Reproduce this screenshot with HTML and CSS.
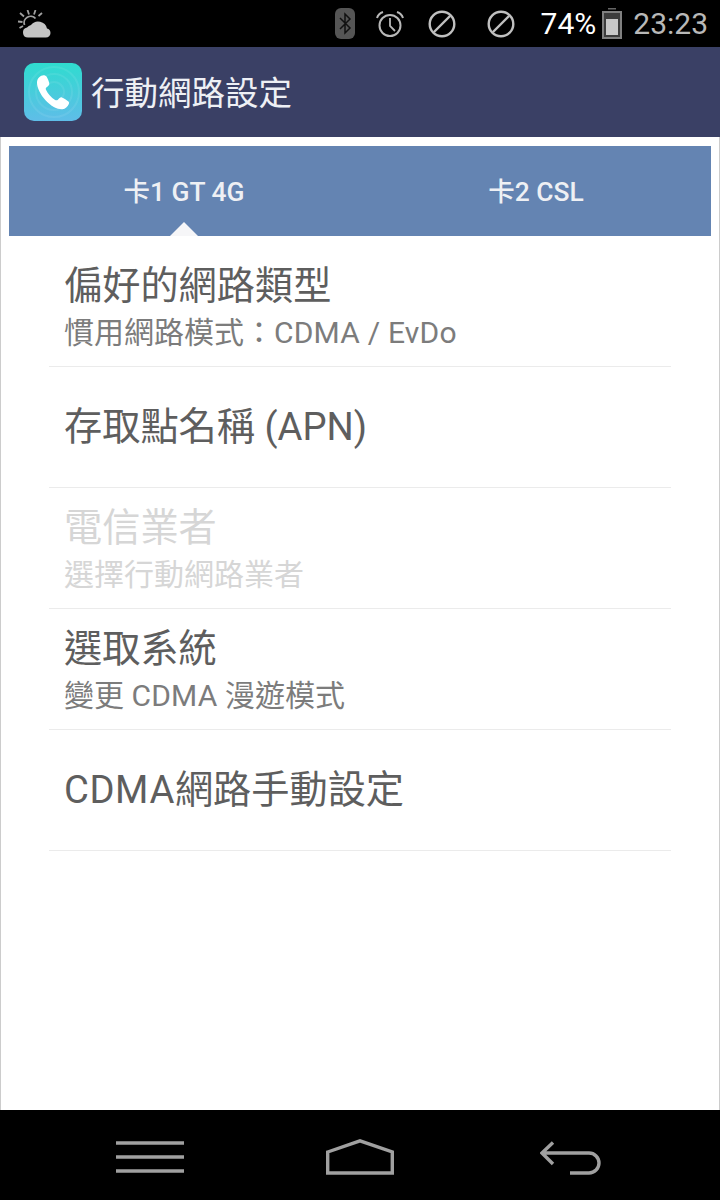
FILE: index.html
```html
<!DOCTYPE html>
<html lang="zh-Hant">
<head>
    <meta charset="UTF-8">
    <meta name="viewport" content="width=device-width, initial-scale=1.0">
    <title>行動網路設定</title>
    <link rel="stylesheet" href="styles.css">
</head>
<body>

    <!-- status bar -->
    <div class="status-bar">
        <svg class="weather-icon" width="34" height="28" viewBox="0 0 34 28">
            <g stroke="#a0a0a0" stroke-width="1.800" fill="none">
                <path d="M3 3l4 3.500M10.500 0l1.500 4.500M18.500 0l-1.500 4.500M25 3l-3.500 3M1 11.500l4.500 .5M2.500 18l3.500-2"/>
                <path d="M7.500 15a6.500 6.500 0 0 1 11-6.500"/>
            </g>
            <path d="M11 27.500a5 5 0 0 1-1-9.900a7.500 7.500 0 0 1 4-2.500a9 9 0 0 1 16 3.500a4.600 4.600 0 0 1 3.500 4.300a4.600 4.600 0 0 1-4.600 4.600z" fill="#c4c4c4"/>
        </svg>
        <div class="status-right">
            <svg class="bt-icon" width="20" height="31" viewBox="0 0 20 31">
                <rect width="20" height="31" rx="6" fill="#555"/>
                <path d="M5 10l10 10-5 5V6l5 5-10 10" fill="none" stroke="#111" stroke-width="1.500"/>
            </svg>
            <svg class="alarm-icon" width="30" height="30" viewBox="0 0 30 30" fill="none" stroke="#b8b8b8" stroke-width="2">
                <circle cx="15" cy="16.500" r="10.500"/>
                <path d="M15 9v8l5 5" stroke-width="1.800"/>
                <path d="M2 9c1-3 3-5 6-6M28 9c-1-3-3-5-6-6"/>
            </svg>
            <svg class="block-icon" width="28" height="28" viewBox="0 0 28 28" fill="none" stroke="#c0c0c0" stroke-width="2.400">
                <circle cx="14" cy="14" r="12.300"/>
                <path d="M6 22L22 6"/>
            </svg>
            <svg class="block-icon second" width="28" height="28" viewBox="0 0 28 28" fill="none" stroke="#c0c0c0" stroke-width="2.400">
                <circle cx="14" cy="14" r="12.300"/>
                <path d="M6 22L22 6"/>
            </svg>
            <span class="battery-text">74%</span>
            <svg class="battery-icon" width="20" height="31" viewBox="0 0 20 31">
                <rect x="6" y="0" width="8" height="1.500" fill="#666"/>
                <rect x="1" y="4" width="18" height="26" fill="#3c3c3c" stroke="#808080" stroke-width="2"/>
                <rect x="4" y="11" width="12" height="16" fill="#c8c8c8"/>
            </svg>
            <span class="clock">23:23</span>
        </div>
    </div>

    <!-- title bar -->
    <div class="app-bar">
        <div class="app-icon">
            <svg width="58" height="58" viewBox="0 0 58 58">
                <g fill="none" stroke="#fff" stroke-opacity="0.08" stroke-width="2">
                    <circle cx="30" cy="29" r="10"/>
                    <circle cx="30" cy="29" r="18"/>
                    <circle cx="30" cy="29" r="25"/>
                </g>
                <path transform="translate(-1 1)" d="M16 13.500c2-2 4-2.500 6-2l1.500 1c1 1.500 2.500 5 2.800 7 .2 1.500-1 2.500-3 4-.7.700-.7 1.500-.2 2.500 2 4 5 7.500 9 10 1 .5 2 .5 2.800-.3 1.500-1.700 2.700-2.700 4-2.200 2 .8 5 2.700 6.500 4 .7.700.9 1.500.3 2.800-1 2.500-3.500 4.700-6.200 5-5 .3-11.500-3-17-9-5-5.500-8.500-12.500-8.500-17.500 0-2.300.7-4.300 2-5.300z" fill="#fff"/>
            </svg>
        </div>
        <h1 class="app-title">行動網路設定</h1>
    </div>

    <div class="content">
        <div class="tabs">
            <div class="tab active">卡1 GT 4G</div>
            <div class="tab">卡2 CSL</div>
        </div>

        <div class="list">
            <div class="list-item">
                <div class="item-title">偏好的網路類型</div>
                <div class="item-sub">慣用網路模式：<span class="latin">CDMA / EvDo</span></div>
            </div>
            <div class="list-item">
                <div class="item-title">存取點名稱 (APN)</div>
            </div>
            <div class="list-item disabled">
                <div class="item-title">電信業者</div>
                <div class="item-sub">選擇行動網路業者</div>
            </div>
            <div class="list-item">
                <div class="item-title">選取系統</div>
                <div class="item-sub">變更 <span class="latin">CDMA</span> 漫遊模式</div>
            </div>
            <div class="list-item">
                <div class="item-title"><span class="latin">CDMA</span>網路手動設定</div>
            </div>
        </div>
    </div>

    <!-- 導覽列 -->
    <div class="nav-bar">
        <svg width="68" height="32" viewBox="0 0 68 32" stroke="#a0a0a0" stroke-width="3.400">
            <path d="M0 2h68M0 16h68M0 30h68"/>
        </svg>
        <svg class="nav-home" width="68" height="36" viewBox="0 0 68 36" fill="none" stroke="#a0a0a0" stroke-width="3.400">
            <path d="M1.700 13L34 1.800 66.300 13v21H1.700z"/>
        </svg>
        <svg class="nav-back" width="62" height="34" viewBox="0 0 62 34" fill="none" stroke="#a0a0a0" stroke-width="3.400">
            <path d="M13 1.500L2 12l11 11M2 12h47a10 10 0 0 1 0 20H30"/>
        </svg>
    </div>

</body>
</html>
```

FILE: styles.css
```css
* {
    margin: 0;
    padding: 0;
    box-sizing: border-box;
}

body {
    width: 720px;
    height: 1200px;
    display: flex;
    flex-direction: column;
    font-family: 'Roboto', 'Noto Sans CJK TC', sans-serif;
    background: #fff;
    overflow: hidden;
}

.status-bar {
    height: 47px;
    background: #000;
    display: flex;
    align-items: center;
    justify-content: space-between;
    padding: 0 12px 0 17px;
}

.status-right {
    display: flex;
    align-items: center;
}

.bt-icon {
    margin-right: 20px;
}

.alarm-icon {
    margin-right: 23px;
}

.block-icon {
    margin-right: 31px;
}

.block-icon.second {
    margin-right: 26px;
}

.battery-text {
    color: #fff;
    font-size: 30px;
    margin-right: 6px;
}

.battery-icon {
    margin-right: 11px;
}

.clock {
    color: #b8b8b8;
    font-size: 30px;
}

.app-bar {
    height: 90px;
    background: #3a4065;
    display: flex;
    align-items: center;
    padding-left: 24px;
}

.app-icon {
    width: 58px;
    height: 58px;
    border-radius: 10px;
    background: linear-gradient(180deg, #2fdccf, #5fbde8);
    margin-right: 9px;
}

.app-title {
    color: #eef0f5;
    font-size: 33.500px;
    font-weight: 400;
    margin-top: -4px;
}

.content {
    flex: 1;
    border-left: 1px solid #ccc;
    border-right: 1px solid #ccc;
    padding: 9px 8px 0;
}

.tabs {
    height: 90px;
    background: #6484b2;
    display: flex;
}

.tab {
    position: relative;
    flex: 1;
    color: #eef0f4;
    font-size: 26.400px;
    font-weight: 500;
    text-align: center;
    line-height: 92px;
}

.tab:first-child {
    padding-right: 2px;
}

.tab.active::after {
    content: "";
    position: absolute;
    left: 161px;
    bottom: 0;
    border-left: 14px solid transparent;
    border-right: 14px solid transparent;
    border-bottom: 14px solid #f6f6f8;
}

.list {
    padding: 10px 40px 0;
}

.list-item {
    height: 121px;
    border-bottom: 1px solid #ebebeb;
    display: flex;
    flex-direction: column;
    justify-content: center;
    padding: 0 15px;
}

.item-title {
    color: #5e5e5e;
    font-size: 38.200px;
    line-height: 50px;
}

.item-title .latin {
    letter-spacing: 0.6px;
}

.item-sub {
    color: #7c7c7c;
    font-size: 30px;
    line-height: 40px;
    margin: 2px 0 -2px;
}

.item-sub .latin {
    letter-spacing: 0.2px;
}

.disabled .item-title,
.disabled .item-sub {
    color: #d6d6d6;
}

.nav-bar {
    height: 90px;
    background: #000;
    display: flex;
    align-items: center;
    justify-content: space-between;
    padding: 3px 118px 0 116px;
}

.nav-home {
    margin-right: 4px;
}

.nav-back {
    margin-top: 2px;
}
```
